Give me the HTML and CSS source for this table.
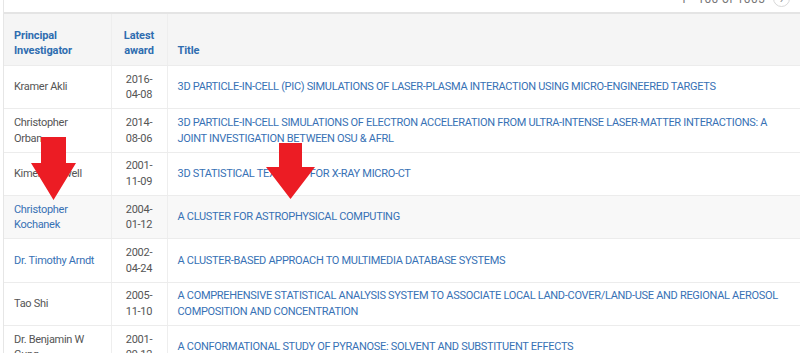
FILE: index.html
```html
<!DOCTYPE html>
<html lang="en">
<head>
<meta charset="utf-8">
<title>Awards</title>
<link rel="stylesheet" href="styles.css">
</head>
<body>
<div class="panel">
  <div class="toolbar">
    <span class="range">1 - 100 of 1005</span>
    <span class="next">&#8250;</span>
  </div>
  <table class="grid">
    <colgroup>
      <col class="w-pi">
      <col class="w-date">
      <col>
    </colgroup>
    <thead>
      <tr>
        <th>Principal<br>Investigator</th>
        <th class="c-date">Latest<br>award</th>
        <th>Title</th>
      </tr>
    </thead>
    <tbody>
      <tr>
        <td>Kramer Akli</td>
        <td class="c-date">2016-<br>04-08</td>
        <td><a href="#">3D PARTICLE-IN-CELL (PIC) SIMULATIONS OF LASER-PLASMA INTERACTION USING MICRO-ENGINEERED TARGETS</a></td>
      </tr>
      <tr>
        <td>Christopher<br>Orban</td>
        <td class="c-date">2014-<br>08-06</td>
        <td><a href="#">3D PARTICLE-IN-CELL SIMULATIONS OF ELECTRON ACCELERATION FROM ULTRA-INTENSE LASER-MATTER INTERACTIONS: A JOINT INVESTIGATION BETWEEN OSU &amp; AFRL</a></td>
      </tr>
      <tr>
        <td>Kimerly Powell</td>
        <td class="c-date">2001-<br>11-09</td>
        <td><a href="#">3D STATISTICAL TEXTURES FOR X-RAY MICRO-CT</a></td>
      </tr>
      <tr class="hover">
        <td><a href="#">Christopher<br>Kochanek</a></td>
        <td class="c-date">2004-<br>01-12</td>
        <td><a href="#">A CLUSTER FOR ASTROPHYSICAL COMPUTING</a></td>
      </tr>
      <tr>
        <td><a href="#">Dr. Timothy Arndt</a></td>
        <td class="c-date">2002-<br>04-24</td>
        <td><a href="#">A CLUSTER-BASED APPROACH TO MULTIMEDIA DATABASE SYSTEMS</a></td>
      </tr>
      <tr>
        <td>Tao Shi</td>
        <td class="c-date">2005-<br>11-10</td>
        <td><a href="#">A COMPREHENSIVE STATISTICAL ANALYSIS SYSTEM TO ASSOCIATE LOCAL LAND-COVER/LAND-USE AND REGIONAL AEROSOL COMPOSITION AND CONCENTRATION</a></td>
      </tr>
      <tr>
        <td>Dr. Benjamin W<br>Gung</td>
        <td class="c-date">2001-<br>09-12</td>
        <td><a href="#">A CONFORMATIONAL STUDY OF PYRANOSE: SOLVENT AND SUBSTITUENT EFFECTS</a></td>
      </tr>
    </tbody>
  </table>
</div>
<svg class="arrows" width="800" height="353" viewBox="0 0 800 353" aria-hidden="true">
  <polygon points="41,137 66,137 66,163 76,163 53.5,200 31,163 41,163" fill="#ec1c24"/>
  <polygon points="279,143 302,143 302,167 315,167 290.5,199 266,167 279,167" fill="#ec1c24"/>
</svg>
</body>
</html>
```
FILE: styles.css
```css
html, body {
  margin: 0;
  padding: 0;
  background: #fff;
  overflow: hidden;
}
body {
  font-family: Roboto, "Liberation Sans", sans-serif;
  font-size: 11px;
  letter-spacing: -0.3px;
  color: #555;
  height: 353px;
}
.panel {
  margin-left: 3px;
  border-left: 1px solid #e6e6e6;
}
.toolbar {
  height: 29px;
  margin-top: -15px;
  display: flex;
  justify-content: flex-end;
  align-items: center;
  gap: 8px;
  padding-right: 10px;
  border-bottom: 2px solid #e4e4e4;
  box-sizing: border-box;
}
.range {
  color: #777;
  font-size: 12px;
  letter-spacing: 0.3px;
}
.next {
  width: 17px;
  height: 17px;
  border: 1px solid #d8d8d8;
  border-radius: 50%;
  display: flex;
  align-items: center;
  justify-content: center;
  color: #888;
  font-size: 13px;
  line-height: 1;
  box-sizing: border-box;
}
.grid {
  width: 100%;
  border-collapse: collapse;
  table-layout: fixed;
}
.w-pi { width: 107px; }
.w-date { width: 56px; }
.grid th, .grid td {
  border-right: 1px solid #eeeeee;
  border-bottom: 1px solid #ececec;
  padding: 5.5px 10px;
  line-height: 15.67px;
  vertical-align: middle;
  text-align: left;
}
.grid th:last-child, .grid td:last-child {
  border-right: none;
}
.grid thead th {
  background: #f5f5f5;
  color: #2f6db0;
  font-weight: 700;
  letter-spacing: -0.1px;
  vertical-align: bottom;
  height: 44px;
  padding-top: 0;
  padding-bottom: 7px;
  line-height: 14.5px;
}
.grid .c-date { text-align: center; padding-left: 6px; padding-right: 6px; }
a {
  color: #3771b5;
  text-decoration: none;
}
tr.hover td {
  background: #f8f8f8;
}
.arrows {
  position: absolute;
  left: 0;
  top: 0;
  pointer-events: none;
}
```
